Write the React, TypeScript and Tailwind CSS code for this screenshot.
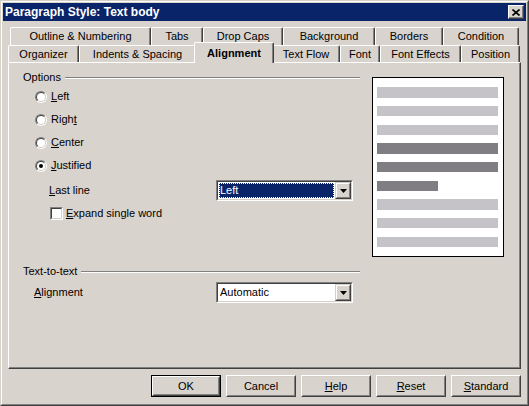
import React from 'react';

const row1 = [
  { label: 'Outline & Numbering', w: 'w-[141px]' },
  { label: 'Tabs', w: 'w-[52px]' },
  { label: 'Drop Caps', w: 'w-[80px]' },
  { label: 'Background', w: 'w-[92px]' },
  { label: 'Borders', w: 'w-[68px]' },
  { label: 'Condition', w: 'w-[76px]' },
];

const row2 = [
  { label: 'Organizer', w: 'w-[71px]' },
  { label: 'Indents & Spacing', w: 'w-[117px]' },
  { label: 'Alignment', w: 'w-[76px]', active: true },
  { label: 'Text Flow', w: 'w-[68px]' },
  { label: 'Font', w: 'w-[40px]' },
  { label: 'Font Effects', w: 'w-[81px]' },
  { label: 'Position', w: 'w-[59px]' },
];

// preview bars: top margin, height, dark?, short?
const bars = [
  { mt: 'mt-[9px]', h: 'h-[11px]', dark: false },
  { mt: 'mt-[8px]', h: 'h-[10px]', dark: false },
  { mt: 'mt-[9px]', h: 'h-[10px]', dark: false },
  { mt: 'mt-[8px]', h: 'h-[11px]', dark: true },
  { mt: 'mt-[8px]', h: 'h-[10px]', dark: true },
  { mt: 'mt-[9px]', h: 'h-[10px]', dark: true, short: true },
  { mt: 'mt-[8px]', h: 'h-[11px]', dark: false },
  { mt: 'mt-[8px]', h: 'h-[10px]', dark: false },
  { mt: 'mt-[9px]', h: 'h-[10px]', dark: false },
];

function Tab({ label, w, active }: { label: string; w: string; active?: boolean }) {
  if (active) {
    return (
      <div
        className={`relative z-10 -mx-[2px] -mb-[1px] h-[20px] ${w} box-content px-[1px] flex items-center justify-center rounded-t-[2px] border-l border-t border-white border-r border-r-[#404040] shadow-[inset_-1px_0_#808080] bg-[#d9d3ce] font-bold`}
      >
        {label}
      </div>
    );
  }
  return (
    <div
      className={`h-full ${w} flex items-center justify-center rounded-t-[2px] border-l border-t border-white border-r border-r-[#404040] shadow-[inset_-1px_0_#808080] bg-[#d9d3ce]`}
    >
      {label}
    </div>
  );
}

function Radio({ checked }: { checked?: boolean }) {
  return (
    <div className="w-[12px] h-[12px] rounded-full border border-t-[#808080] border-l-[#808080] border-r-white border-b-white">
      <div className="w-full h-full rounded-full border border-t-[#404040] border-l-[#404040] border-r-[#d4d0c8] border-b-[#d4d0c8] bg-white flex items-center justify-center">
        {checked && <div className="w-[4px] h-[4px] rounded-full bg-black" />}
      </div>
    </div>
  );
}

function Combo({ value, focused }: { value: string; focused?: boolean }) {
  return (
    <div className="w-[137px] h-[21px] border border-t-[#808080] border-l-[#808080] border-r-white border-b-white">
      <div className="w-full h-full border border-t-[#404040] border-l-[#404040] border-r-[#d4d0c8] border-b-[#d4d0c8] bg-white flex">
        <div className="flex-1 flex items-center p-[1px]">
          {focused ? (
            <div className="w-full h-full bg-[#0a246a] text-white flex items-center pl-[1px] outline-1 outline-dotted outline-white -outline-offset-1">
              {value}
            </div>
          ) : (
            <div className="pl-[1px]">{value}</div>
          )}
        </div>
        <div className="w-[16px] h-full border border-t-[#d4d0c8] border-l-[#d4d0c8] border-r-[#404040] border-b-[#404040]">
          <div className="w-full h-full border border-t-white border-l-white border-r-[#808080] border-b-[#808080] bg-[#d9d3ce] flex items-center justify-center">
            <svg width="7" height="4" viewBox="0 0 7 4">
              <path d="M0 0h7L3.5 4z" fill="black" />
            </svg>
          </div>
        </div>
      </div>
    </div>
  );
}

function Button({ children, isDefault }: { children: React.ReactNode; isDefault?: boolean }) {
  return (
    <div className={`w-[70px] h-[22px] ${isDefault ? 'border border-black' : ''}`}>
      <div className="w-full h-full border border-t-white border-l-white border-r-[#404040] border-b-[#404040]">
        <div className="w-full h-full border border-t-[#d4d0c8] border-l-[#d4d0c8] border-r-[#808080] border-b-[#808080] flex items-center justify-center">
          {children}
        </div>
      </div>
    </div>
  );
}

function GroupHeader({ label }: { label: string }) {
  return (
    <div className="h-[13px] flex items-center gap-[4px]">
      <span>{label}</span>
      <div className="flex-1 h-[2px] border-t border-t-[#808080] border-b border-b-white" />
    </div>
  );
}

export default function App() {
  return (
    <div className="w-[529px] h-[406px] bg-[#d9d3ce] text-black text-[11px] leading-[13px] font-['Liberation_Sans',Arial,sans-serif] border border-t-[#d4d0c8] border-l-[#d4d0c8] border-r-[#404040] border-b-[#404040]">
      <div className="w-full h-full border border-t-white border-l-white border-r-[#808080] border-b-[#808080] p-px flex flex-col">
        {/* Title bar */}
        <div className="h-[18px] bg-[#0a246a] flex items-center justify-between pl-[2px] pr-[2px]">
          <span className="text-white font-bold text-[12px]">Paragraph Style: Text body</span>
          <div className="w-[16px] h-[14px] border border-t-white border-l-white border-r-[#404040] border-b-[#404040] bg-[#d9d3ce] shadow-[inset_-1px_-1px_#808080] flex items-center justify-center">
            <svg width="8" height="7" viewBox="0 0 8 7">
              <path d="M0.5 0.5l7 6M7.5 0.5l-7 6" stroke="black" strokeWidth="1.6" />
            </svg>
          </div>
        </div>

        <div className="px-[5px] mt-[6px] flex flex-col">
          {/* Tabs */}
          <div className="h-[18px] flex ml-[2px]">
            {row1.map((t) => (
              <Tab key={t.label} label={t.label} w={t.w} />
            ))}
          </div>
          <div className="h-[17px] flex items-end">
            {row2.map((t) => (
              <Tab key={t.label} label={t.label} w={t.w} active={t.active} />
            ))}
          </div>

          {/* Page */}
          <div className="h-[307px] border-l border-t border-white border-r border-b border-r-[#404040] border-b-[#404040] shadow-[inset_-1px_-1px_#808080] flex pl-[14px] pt-[8px]">
            <div className="w-[337px] flex flex-col">
              <GroupHeader label="Options" />
              <div className="mt-[6px] ml-[12px] flex flex-col gap-[10px]">
                <div className="h-[13px] flex items-center gap-[4px]">
                  <Radio />
                  <span><u>L</u>eft</span>
                </div>
                <div className="h-[13px] flex items-center gap-[4px]">
                  <Radio />
                  <span>Righ<u>t</u></span>
                </div>
                <div className="h-[13px] flex items-center gap-[4px]">
                  <Radio />
                  <span><u>C</u>enter</span>
                </div>
                <div className="h-[13px] flex items-center gap-[4px]">
                  <Radio checked />
                  <span><u>J</u>ustified</span>
                </div>
              </div>
              <div className="mt-[8px] ml-[26px] flex items-center">
                <span className="w-[167px]"><u>L</u>ast line</span>
                <Combo value="Left" focused />
              </div>
              <div className="mt-[6px] ml-[27px] h-[13px] flex items-center gap-[3px]">
                <div className="w-[13px] h-[13px] border border-t-[#808080] border-l-[#808080] border-r-white border-b-white">
                  <div className="w-full h-full border border-t-[#404040] border-l-[#404040] border-r-[#d4d0c8] border-b-[#d4d0c8] bg-white" />
                </div>
                <span><u>E</u>xpand single word</span>
              </div>

              <div className="mt-[45px]">
                <GroupHeader label="Text-to-text" />
              </div>
              <div className="mt-[4px] ml-[11px] flex items-center">
                <span className="w-[182px]"><u>A</u>lignment</span>
                <Combo value="Automatic" />
              </div>
            </div>

            {/* Preview */}
            <div className="ml-[12px] mt-[6px] w-[132px] h-[180px] border border-black bg-white pl-[4px] flex flex-col">
              {bars.map((b, i) => (
                <div
                  key={i}
                  className={`${b.mt} ${b.h} ${b.short ? 'w-[61px]' : 'w-[121px]'} ${b.dark ? 'bg-[#807e82]' : 'bg-[#c5c3c7]'}`}
                />
              ))}
            </div>
          </div>

          {/* Buttons */}
          <div className="mt-[6px] flex justify-end gap-[5px]">
            <Button isDefault>OK</Button>
            <Button>Cancel</Button>
            <Button><span><u>H</u>elp</span></Button>
            <Button><span><u>R</u>eset</span></Button>
            <Button><span><u>S</u>tandard</span></Button>
          </div>
        </div>
      </div>
    </div>
  );
}
